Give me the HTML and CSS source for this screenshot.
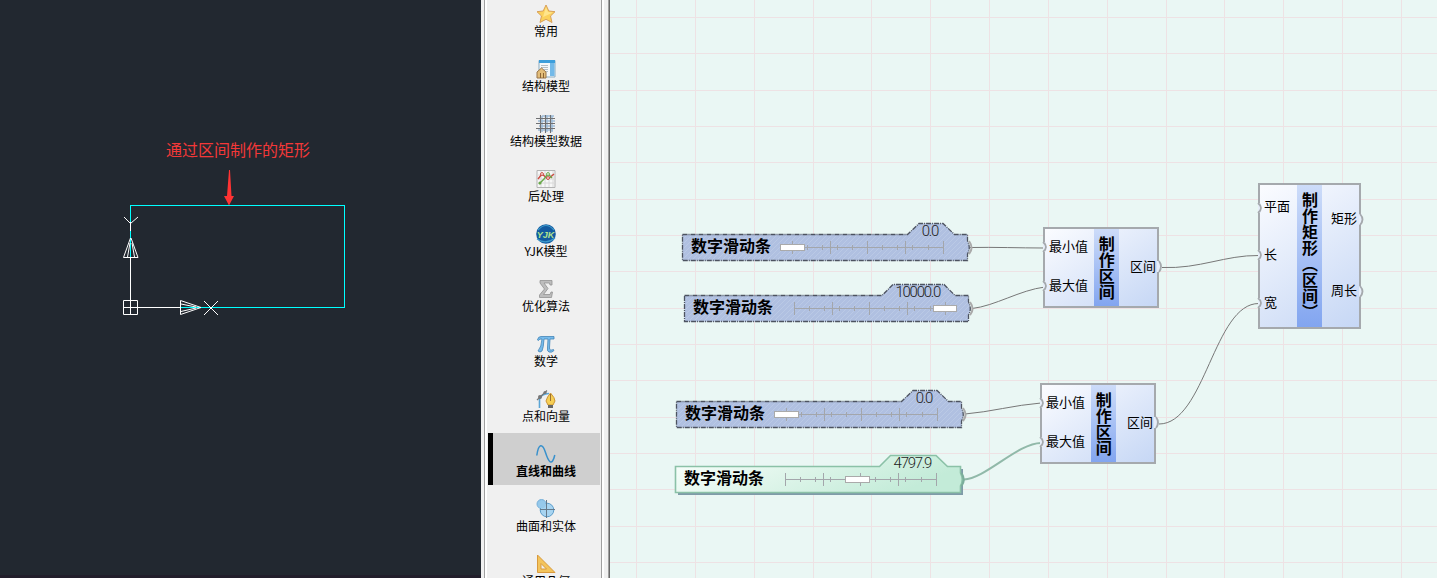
FILE: index.html
```html
<!DOCTYPE html>
<html lang="zh-CN">
<head>
<meta charset="utf-8">
<title>直线和曲线</title>
<link rel="stylesheet" href="styles.css">
</head>
<body>
<div class="app">
  <section class="viewport">
    <svg class="drawing" width="481" height="578" viewBox="0 0 481 578">
      <rect class="shape" x="130.500" y="205.500" width="214" height="102"/>
      <path class="arrow" d="M229 170H230L231.500 196H234L229 205.500L224 196H227Z"/>
      <g class="axis">
        <path d="M123.500 300.500H137.500V314.500H123.500ZM130.500 222V231M130.500 257V314.500M123.500 307.500H180.500M124 217L130.500 223.500L138 217M204 301L218 315M218 301L204 315"/>
        <path d="M130.500 238L123.500 257.500H138L131 238M130 243L127.500 257M132 243L134.500 257M180.500 300.500V314.500L201 307.500ZM181 304L196 307M181 311.500L196 308"/>
      </g>
    </svg>
    <p class="caption">通过区间制作的矩形</p>
  </section>
  <aside class="dock">
    <nav class="panel">
      <div class="item"><svg viewBox="0 0 20 20"><path d="M10 1L12.800 7L19 7.700L14.500 12L16 18.500L10 15.300L4 18.500L5.500 12L1 7.700L7.200 7Z" fill="#fbd15c" stroke="#d8a05a"/><path d="M10 3L12 8L17 8.500L7 13Z" fill="#ffe58c"/></svg><span>常用</span></div>
      <div class="item"><svg viewBox="0 0 20 20"><path d="M3 1.500H19V18H3Z" fill="#f4f8fa" stroke="#8aabc0"/><path d="M3 1H19V4H3Z" fill="#3c9edb"/><path d="M14 4H18.500V17H14Z" fill="#73b9e8"/><path d="M5 6.500H12M5 8.500H12M8 10.500H12M10 12.500H12" stroke="#b3bec6"/><path d="M1 13L5.500 9L10 13V19H1Z" fill="#e3bd79" stroke="#997548"/><path d="M4 14H5V19H4ZM7 14H8V19H7Z" fill="#8b6333"/></svg><span>结构模型</span></div>
      <div class="item"><svg viewBox="0 0 20 20"><path d="M6 2H18M2 7H19M3 12H19M2 16H17M6 2V18M11 1V18M16 2V18" stroke="#9dbbd8" stroke-width="1.500" fill="none"/><path d="M0 4.500H19M0 9.500H19M0 14.500H19M4.500 1V19M9.500 1V19M14.500 1V19" stroke="#6f7072" stroke-width="1.100"/></svg><span>结构模型数据</span></div>
      <div class="item"><svg viewBox="0 0 20 20"><path d="M1 1.500H19V18.500H1Z" fill="#f7f7f7" stroke="#b3b3b3"/><path d="M5 2V18M9 2V18M13 2V18M17 2V18M1 6H19M1 10H19M1 14H19" stroke="#d8d8d8"/><path d="M2 10L6 5L12 10L18 5" stroke="#cc4b42" fill="none" stroke-width="1.400"/><path d="M3 15L8 10L12 5L16 9" stroke="#68a849" fill="none" stroke-width="1.400"/><g fill="#fff"><circle cx="6" cy="5" r="1.400" stroke="#cc4b42"/><circle cx="12" cy="9" r="1.400" stroke="#cc4b42"/><circle cx="12" cy="5" r="1.400" stroke="#68a849"/></g><circle cx="4" cy="14" r="1.500" fill="#68a849"/></svg><span>后处理</span></div>
      <div class="item"><svg viewBox="0 0 20 20"><circle cx="10" cy="10" r="9.800" fill="#135a9f"/><path d="M2 6Q10-3 18 6M1 15Q10 21 19 14" fill="none" stroke="#3d9acb" stroke-width="1.200"/><text class="logo" x="9.500" y="13.500">YJK</text></svg><span>YJK模型</span></div>
      <div class="item"><svg viewBox="0 0 20 20"><path d="M4 1.500H16V6H14L13.500 4H8L12 9.500L7.500 15.500H14L15 13H16.500L15.500 18.500H3.500V16L8.500 10L4 4Z" fill="#bdbdbd" stroke="#929292" stroke-width=".8"/></svg><span>优化算法</span></div>
      <div class="item"><svg viewBox="0 0 20 20"><path d="M1.500 6Q2 2.500 5 2.500H18V5H14L13.500 14Q13.500 17 17.500 15.500L18 16.500Q16 19 13 18Q11 17.500 11.500 14L12 5H8Q7.500 14 6 17Q4 19 2 17Q5.500 13 6 5Q3.500 4.500 2.500 6.500Z" fill="#76bbec" stroke="#4384b6" stroke-width=".8"/></svg><span>数学</span></div>
      <div class="item"><svg viewBox="0 0 20 20"><path d="M3.500 19V10Q5 5 13 4.500" stroke="#5ba5d5" stroke-width="1.600" fill="none"/><path d="M1 11L11 1.500" stroke="#777" stroke-width="1.200"/><circle cx="4" cy="8" r="2" fill="#777"/><circle cx="9" cy="3.500" r="1.600" fill="#777"/><path d="M14.500 4Q19 9 19 12L17 16H12L10 12Q11 8 14.500 4Z" fill="#f6cf55" stroke="#cc9432"/><path d="M12 16H17V19H12Z" fill="#666"/><path d="M14.500 5V12" stroke="#9c7130"/></svg><span>点和向量</span></div>
      <div class="item selected"><svg viewBox="0 0 20 20"><path d="M.8 11.500C2.500-1 6.500-1 9.500 8.500S16 23 18.800 11" fill="none" stroke="#3991cc" stroke-width="1.500"/></svg><span>直线和曲线</span></div>
      <div class="item"><svg viewBox="0 0 20 20"><circle cx="5.500" cy="5" r="4.500" fill="#91c6ea" stroke="#78b0d9"/><circle cx="11" cy="11" r="6.800" fill="#a7d4f1" stroke="#5c9dca"/><circle cx="6" cy="5.500" r="3.800" fill="#96c9eb"/><path d="M10.500 1V19M4 10.500H19" stroke="#65798a"/></svg><span>曲面和实体</span></div>
      <div class="item"><svg viewBox="0 0 20 20"><path fill-rule="evenodd" d="M1.500 1L19 18.500H1.500ZM5 9.500V15H10.500Z" fill="#f3c45c" stroke="#d99a3c"/></svg><span>通用几何</span></div>
    </nav>
  </aside>
  <main class="canvas">
    <svg class="wires" width="827" height="578" viewBox="610 0 827 578">
      <defs>
        <pattern id="hatch" width="5" height="5" patternUnits="userSpaceOnUse"><rect width="5" height="5" fill="#b0c0e1"/><path d="M0 5L5 0" stroke="#bccbe6" stroke-width=".8"/></pattern>
        <linearGradient id="mint" x1="0" x2="1" y1="0" y2=".3"><stop stop-color="#fafffc"/><stop offset="1" stop-color="#c3ebd8"/></linearGradient>
      </defs>
      <path class="grid" d="M636.500 0V578M695.500 0V578M754.500 0V578M813.500 0V578M871.500 0V578M930.500 0V578M989.500 0V578M1048.500 0V578M1107.500 0V578M1166.500 0V578M1224.500 0V578M1283.500 0V578M1342.500 0V578M1401.500 0V578M610 17.500H1437M610 53.500H1437M610 90.500H1437M610 126.500H1437M610 162.500H1437M610 199.500H1437M610 235.500H1437M610 271.500H1437M610 308.500H1437M610 344.500H1437M610 380.500H1437M610 417.500H1437M610 453.500H1437M610 489.500H1437M610 526.500H1437M610 562.500H1437"/>
      <path class="wire" d="M970 247.500C995 247 1020 248 1043 248M972 308.500C995 306 1020 290 1045 287M965 414C990 412 1015 405 1041 403M1162 267.500C1200 269 1225 255 1259 255.500M1159 424C1205 424 1214 303 1259 303.500"/>
      <path class="wire active" d="M964 479.500C985 479 1018 443 1041 443"/>
    </svg>

    <div class="slider s1">
      <svg viewBox="0 0 294 46"><path class="body" d="M1.500 13.500H226.500L238 2.500H262L273.500 13.500H286.500V20Q290 27 286.500 33V39.500H1.500Z"/><path class="port" d="M288 20Q293 27 288 33"/><path class="ticks" d="M111 26.500H262.500M111.500 20V33M149.500 20V33M186.500 20V33M224.500 20V33M262.500 20V33M126.500 24V29M141.500 24V29M156.500 24V29M171.500 24V29M201.500 24V29M216.500 24V29M231.500 24V29M247.500 24V29"/><rect class="thumb" x="99.500" y="23.500" width="24" height="6"/></svg>
      <b>数字滑动条</b><i>0.0</i>
    </div>
    <div class="slider s2">
      <svg viewBox="0 0 294 46"><path class="body" d="M1.500 13.500H199L210 2.500H261L272 13.500H285.500V20Q289 27 285.500 33V39.500H1.500Z"/><path class="port" d="M287 20Q292 27 287 33"/><path class="ticks" d="M111 26.500H262.500M111.500 20V33M149.500 20V33M186.500 20V33M224.500 20V33M262.500 20V33M126.500 24V29M141.500 24V29M156.500 24V29M171.500 24V29M201.500 24V29M216.500 24V29M231.500 24V29M247.500 24V29"/><rect class="thumb" x="250.500" y="23.500" width="23" height="6"/></svg>
      <b>数字滑动条</b><i>10000.0</i>
    </div>
    <div class="slider s3">
      <svg viewBox="0 0 294 46"><path class="body" d="M1.500 13.500H226.500L238 2.500H262L273.500 13.500H286.500V20Q290 27 286.500 33V39.500H1.500Z"/><path class="port" d="M288 20Q293 27 288 33"/><path class="ticks" d="M111 26.500H262.500M111.500 20V33M149.500 20V33M186.500 20V33M224.500 20V33M262.500 20V33M126.500 24V29M141.500 24V29M156.500 24V29M171.500 24V29M201.500 24V29M216.500 24V29M231.500 24V29M247.500 24V29"/><rect class="thumb" x="99.500" y="23.500" width="24" height="6"/></svg>
      <b>数字滑动条</b><i>0.0</i>
    </div>
    <div class="slider s4 active">
      <svg viewBox="0 0 294 46"><path class="shadow" d="M4 41H288V16"/><path class="body" d="M1.500 13.500H205.500L216.500 2.500H262L273.500 13.500H286.500V20Q290 27 286.500 33V39.500H1.500Z"/><path class="port" d="M287.500 20Q292 27 287.500 33"/><path class="ticks" d="M111 26.500H262.500M111.500 20V33M149.500 20V33M186.500 20V33M224.500 20V33M262.500 20V33M126.500 24V29M141.500 24V29M156.500 24V29M171.500 24V29M201.500 24V29M216.500 24V29M231.500 24V29M247.500 24V29"/><rect class="thumb" x="171.500" y="23.500" width="24" height="6"/></svg>
      <b>数字滑动条</b><i>4797.9</i>
    </div>

    <div class="node n1">
      <div class="inputs"><span>最小值</span><span>最大值</span></div>
      <strong>制作区间</strong>
      <div class="outputs"><span>区间</span></div>
      <svg class="ports" viewBox="0 0 120 82"><path class="gap" d="M1.500 15V25M1.500 54V64M115.500 34V45"/><path d="M0 15Q6 20 0 25M0 54Q6 59 0 64M116 34Q120 39.500 116 45"/></svg>
    </div>
    <div class="node n2">
      <div class="inputs"><span>最小值</span><span>最大值</span></div>
      <strong>制作区间</strong>
      <div class="outputs"><span>区间</span></div>
      <svg class="ports" viewBox="0 0 120 82"><path class="gap" d="M1.500 15V25M1.500 54V64M115.500 34V45"/><path d="M0 15Q6 20 0 25M0 54Q6 59 0 64M116 34Q120 39.500 116 45"/></svg>
    </div>
    <div class="node n3">
      <div class="inputs"><span>平面</span><span>长</span><span>宽</span></div>
      <strong>制作矩形（区间）</strong>
      <div class="outputs"><span>矩形</span><span>周长</span></div>
      <svg class="ports" viewBox="0 0 108 146"><path class="gap" d="M1.500 20V30M1.500 67V77M1.500 115V125M102.500 31V42M102.500 103V114"/><path d="M0 20Q6 25 0 30M0 67Q6 72 0 77M0 115Q6 120 0 125M102 31Q107 36.500 102 42M102 103Q107 108.500 102 114"/></svg>
    </div>
  </main>
</div>
</body>
</html>
```
FILE: styles.css
```css
* { box-sizing: border-box; }
body { margin: 0; overflow: hidden; font: 12px "Noto Sans CJK SC", sans-serif; color: #000; }
svg { display: block; overflow: visible; fill: none; }
.app { display: flex; width: 1437px; height: 578px; overflow: hidden; }

.viewport { position: relative; width: 481px; background: #222830; border-bottom: 3px solid #221e2b; }
.drawing .shape { stroke: #00ffff; }
.drawing .arrow { fill: #ff3333; }
.drawing .axis { stroke: #fff; }
.caption { position: absolute; left: 166px; top: 137px; margin: 0; font-size: 16px; line-height: 24px; color: #f33838; white-space: nowrap; }

.dock { width: 129px; background: #f0f0f0; border-left: 3px solid #f0f0f0; border-right: 1px solid #696969; box-shadow: inset -1px 0 #a0a0a0; }
.panel { width: 118px; height: 578px; overflow: hidden; border: solid #a0a0a0; border-width: 0 1px; padding: 0 1px 0 3px; box-shadow: inset 2px 0 #fff, 2px 0 #fff; }
.item { display: flex; flex-direction: column; align-items: center; height: 52px; margin-bottom: 3px; padding: 10px 0 0 4px; white-space: nowrap; line-height: 16px; }
.item:first-child { height: 45px; padding-top: 3px; }
.item svg { width: 20px; height: 20px; margin: .5px 0 -1px .5px; }
.selected { background: #cfcfcf; box-shadow: inset 5px 0 #000; font-weight: 700; }
.logo { font: italic 700 9px "Liberation Sans", sans-serif; fill: #b4e58e; text-anchor: middle; }

.canvas { position: relative; width: 827px; background: #eaf7f4; overflow: hidden; }
.grid { stroke: #eee2e4; }
.wire { stroke: #777; }
.wire.active { stroke: #91b9a9; stroke-width: 2; }

.slider { position: absolute; width: 294px; height: 46px; }
.slider svg { width: 294px; height: 46px; }
.slider .body { fill: url(#hatch); stroke: #4d5360; stroke-dasharray: 5 1 1 1; stroke-width: 1.300; }
.slider.active .body { fill: url(#mint); stroke: #8bc1a7; stroke-dasharray: none; stroke-width: 1.600; }
.port { stroke: #aaa; stroke-width: 2; }
.active .port { stroke: #7bae9b; }
.shadow { stroke: #7f9ba8; stroke-width: 2; }
.ticks { stroke: #a3a6ab; }
.slider .thumb { fill: #fff; stroke: #aaa; }
.slider b { position: absolute; left: 10px; top: 13px; font-size: 16px; line-height: 22px; white-space: nowrap; }
.slider i { position: absolute; right: 37px; top: 2px; font: 300 15px/16px Roboto, sans-serif; letter-spacing: -1.300px; color: #222; }
.s1 { left: 71px; top: 221px; }
.s2 { left: 73px; top: 282px; }
.s3 { left: 65px; top: 388px; }
.s4 { left: 64px; top: 453px; }

.node { position: absolute; display: flex; border: 2px solid #a5a9ad; background: linear-gradient(145deg, #fbfcff, #c6d7f5); line-height: 16px; font-size: 13px; }
.node .inputs, .node .outputs { display: flex; flex-direction: column; justify-content: space-around; margin: -3px 0 1px; }
.node .inputs { padding-left: 4px; width: 51px; }
.node .outputs { width: 40px; padding-right: 1px; align-items: flex-end; }
.node strong { width: 25px; writing-mode: vertical-rl; text-align: center; font-size: 16px; line-height: 25px; background: linear-gradient(#cddcf9, #82a5f0); }
.node span { white-space: nowrap; }
.n1, .n2 { width: 116px; height: 81px; }
.n1 { left: 433px; top: 227px; }
.n2 { left: 430px; top: 383px; }
.n3 { left: 648px; top: 183px; width: 103px; height: 146px; }
.n3 strong { padding-bottom: 1px; }
.n3 .inputs { width: 37px; }
.n3 .outputs { width: 37px; padding-right: 2px; }
.ports { position: absolute; left: -2px; top: -2px; width: 120px; height: 82px; }
.n3 .ports { width: 108px; height: 146px; }
.ports path { stroke: #a5a9ad; stroke-width: 1.800; }
.ports .gap { stroke: #e7eef9; stroke-width: 3; }
```
